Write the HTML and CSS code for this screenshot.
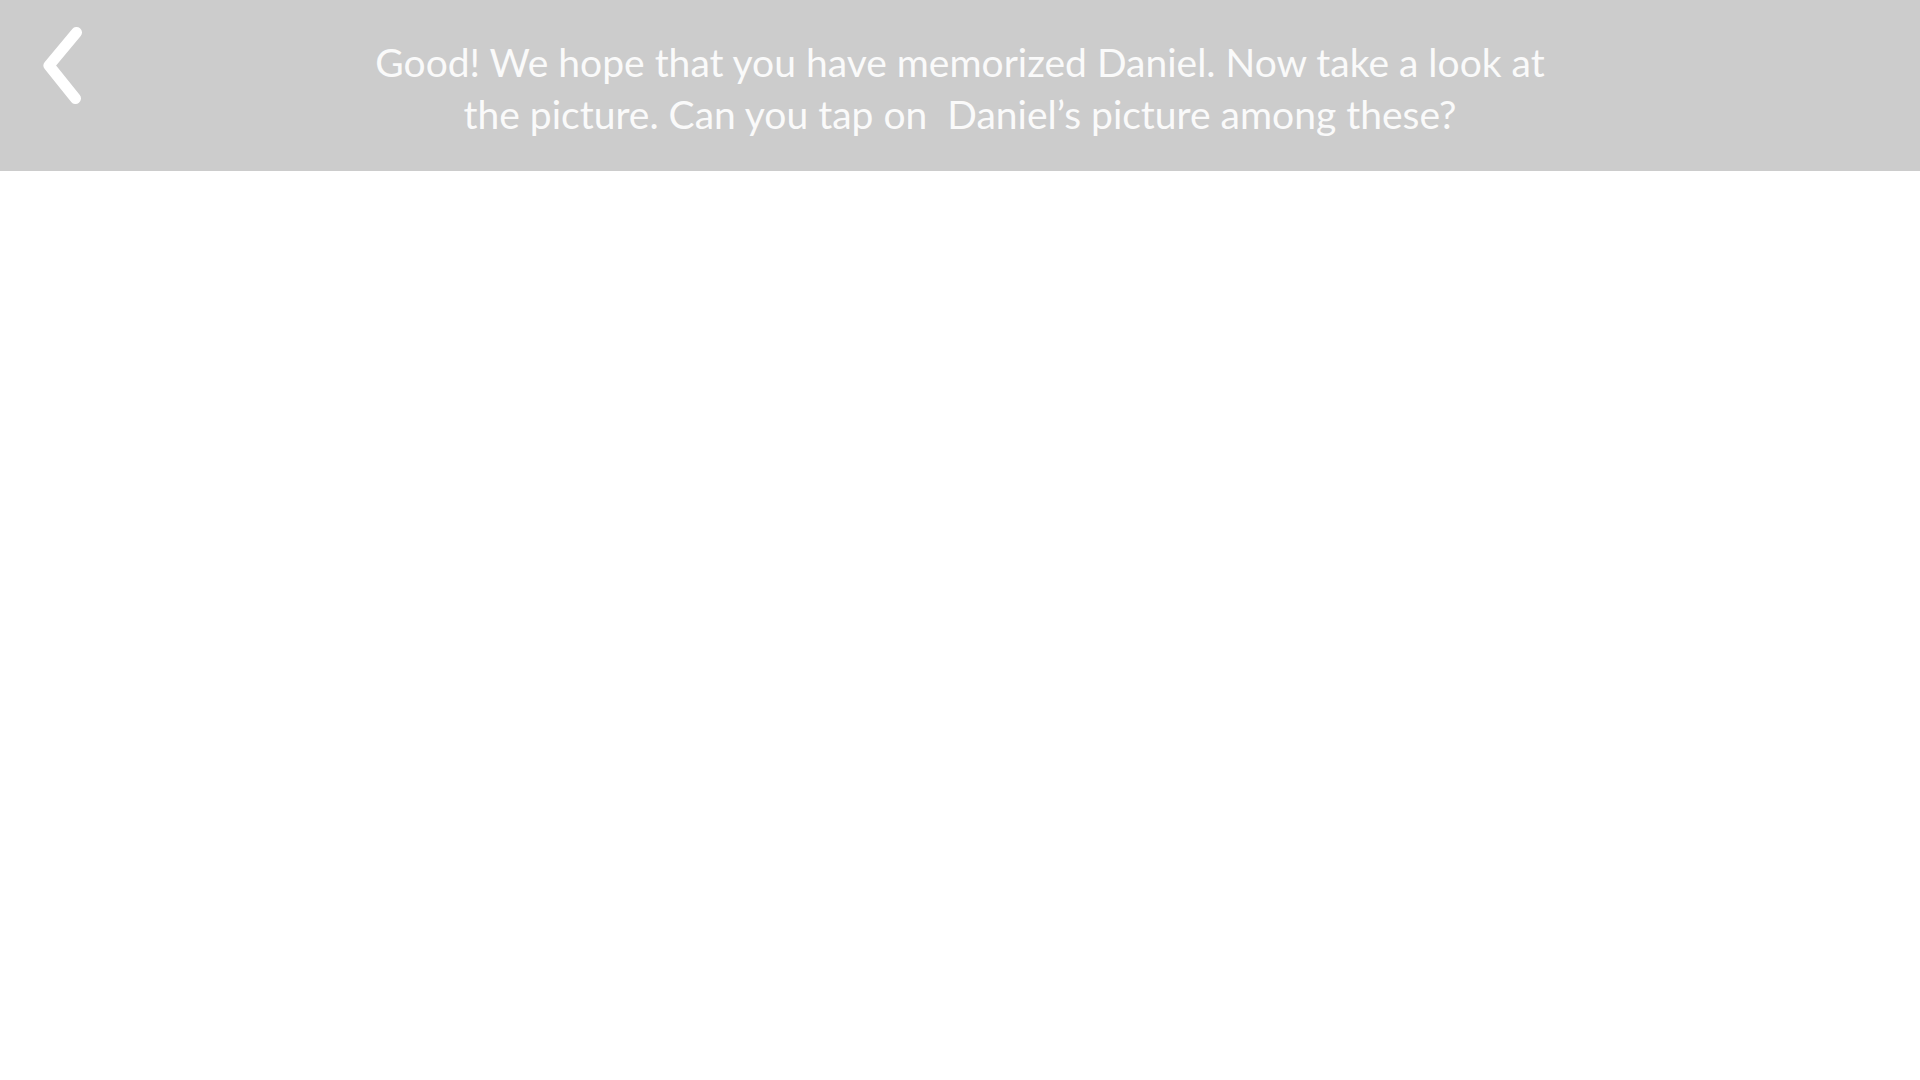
FILE: index.html
```html
<!DOCTYPE html>
<html lang="en">
<head>
<meta charset="utf-8">
<meta name="viewport" content="width=device-width, initial-scale=1">
<title>Find Daniel</title>
<link rel="stylesheet" href="styles.css">
</head>
<body>
<header class="topbar">
  <button class="back" type="button" aria-label="Back">
    <svg class="back-icon" viewBox="0 0 42 78" aria-hidden="true"><path d="M34.500 6.500 7 39.500 33.500 72.500"/></svg>
  </button>
  <h1 class="prompt">Good! We hope that you have memorized Daniel. Now take a look at<br>the picture. Can you tap on&nbsp; Daniel’s picture among these?</h1>
</header>
<main class="board"></main>
</body>
</html>
```
FILE: styles.css
```css
* {
  box-sizing: border-box;
}

body {
  margin: 0;
  min-height: 100vh;
  background: #fff;
}

.topbar {
  display: grid;
  grid-template-columns: 84px 1fr 84px;
  align-items: start;
  padding: 26px 0 31px;
  background: #ccc;
}

.back {
  justify-self: end;
  padding: 0;
  border: 0;
  background: none;
  cursor: pointer;
}

.back-icon {
  display: block;
  width: 42px;
  height: 78px;
  fill: none;
  stroke: #fff;
  stroke-width: 11;
  stroke-linecap: round;
  stroke-linejoin: round;
}

.prompt {
  margin: 0;
  padding-top: 10px;
  color: #fafafa;
  font: 400 39px/52px Lato, "Noto Sans", sans-serif;
  text-align: center;
}
```
